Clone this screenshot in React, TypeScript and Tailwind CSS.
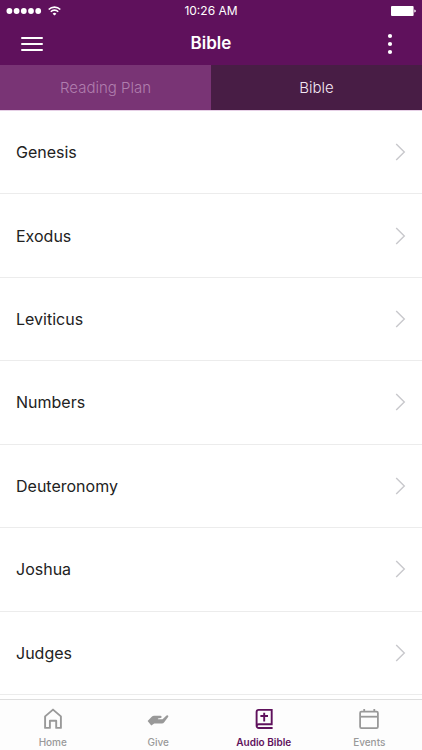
import type { ReactNode } from 'react'

const books = ['Genesis', 'Exodus', 'Leviticus', 'Numbers', 'Deuteronomy', 'Joshua', 'Judges']

const HomeIcon = () => (
  <svg className="h-6 w-6" viewBox="0 0 24 24" fill="none" stroke="currentColor" strokeWidth="1.9">
    <path d="M4.1 20.9V9.4L12 2.6l7.9 6.8v11.5h-4.7v-7.1H8.9v7.1z" strokeLinejoin="round" />
  </svg>
)

const GiveIcon = () => (
  <svg className="h-6 w-6" viewBox="0 0 24 24" fill="currentColor">
    <path d="M1.6 14 6 9.6q.8-.9 2-.9h6.4q1.2 0 1.2 1.2 0 1-1.1 1.2l-2.6.5v.6h4.6l4-3.6q.8-.7 1.5-.1.7.7.1 1.6l-3.9 5.2q-.9 1.2-2.3 1.2H8.2L5.3 18.4z" />
  </svg>
)

const BibleIcon = () => (
  <svg className="h-6 w-6" viewBox="0 0 24 24" fill="none" stroke="currentColor" strokeWidth="1.9">
    <path d="M20.6 21H6.8a2.2 2.2 0 0 1-2.2-2.2V5a2.1 2.1 0 0 1 2.1-2.1h13v14.3H6.8a2.1 2.1 0 0 0-2.1 2" />
    <path d="M12.2 5.8v8.8M8.4 9h7.6" />
  </svg>
)

const EventsIcon = () => (
  <svg className="h-6 w-6" viewBox="0 0 24 24" fill="none" stroke="currentColor" strokeWidth="1.8">
    <rect x="3.1" y="4.7" width="17.8" height="16.4" rx="1.3" />
    <path d="M3.1 9.7h17.8" />
    <path d="M7.2 2v2.7M17.3 2v2.7" />
  </svg>
)

const navItems: { label: string; icon: ReactNode; active?: boolean }[] = [
  { label: 'Home', icon: <HomeIcon /> },
  { label: 'Give', icon: <GiveIcon /> },
  { label: 'Audio Bible', icon: <BibleIcon />, active: true },
  { label: 'Events', icon: <EventsIcon /> },
]

function StatusBar() {
  return (
    <div className="grid h-[22px] grid-cols-3 items-center px-1.5">
      <div className="flex items-center gap-1.5">
        <svg className="h-1.5 w-9" viewBox="0 0 36 6" fill="currentColor">
          <circle cx="3.4" cy="3" r="2.9" />
          <circle cx="10.6" cy="3" r="2.9" />
          <circle cx="17.8" cy="3" r="2.9" />
          <circle cx="25" cy="3" r="2.9" />
          <circle cx="32.2" cy="3" r="2.9" />
        </svg>
        <svg className="h-[10px] w-[13px]" viewBox="0 0 13 10" fill="none" stroke="currentColor" strokeWidth="1.6">
          <path d="M.7 3.5a8.2 8.2 0 0 1 11.6 0" />
          <path d="M2.8 5.7a5.2 5.2 0 0 1 7.4 0" />
          <path d="M6.5 9.6 4.6 7.7a2.7 2.7 0 0 1 3.8 0z" fill="currentColor" stroke="none" />
        </svg>
      </div>
      <span className="text-center text-xs">10:26 AM</span>
      <svg className="h-[10px] w-[25px] justify-self-end" viewBox="0 0 25 10" fill="currentColor">
        <rect width="22.6" height="10" rx="1" />
        <path d="M23.3 3.4q1.5.2 1.5 1.6t-1.5 1.6z" />
      </svg>
    </div>
  )
}

export default function App() {
  return (
    <div className="flex min-h-screen flex-col bg-white font-['Inter','Liberation_Sans',sans-serif] text-[#222222]">
      {/* Header */}
      <header className="bg-[#5f115c] text-white">
        <StatusBar />
        <div className="flex h-[43px] items-center justify-between px-5">
          <button type="button" aria-label="Menu" className="w-6">
            <svg className="h-4 w-6" viewBox="0 0 24 16" stroke="currentColor" strokeWidth="2" strokeLinecap="round">
              <path d="M2 2h20M2 8h20M2 14h20" />
            </svg>
          </button>
          <h1 className="text-[17px] font-semibold">Bible</h1>
          <button type="button" aria-label="More options" className="w-6">
            <svg className="h-[22px] w-6" viewBox="0 0 24 22" fill="currentColor">
              <circle cx="12" cy="3" r="2.1" />
              <circle cx="12" cy="11" r="2.1" />
              <circle cx="12" cy="19" r="2.1" />
            </svg>
          </button>
        </div>
      </header>

      {/* Tabs */}
      <div role="tablist" className="grid h-[46px] grid-cols-2 border-b border-[#e6d0e6] text-[15px] font-light">
        <button type="button" role="tab" aria-selected="false" className="bg-[#793475] pt-0.5 text-[#b07eae]">
          Reading Plan
        </button>
        <button type="button" role="tab" aria-selected="true" className="bg-[#481d45] pt-0.5 text-[#f3e6f3]">
          Bible
        </button>
      </div>

      {/* Books */}
      <ul className="grid flex-1 auto-rows-fr pb-1">
        {books.map((book) => (
          <li key={book} className="border-b border-[#ececec]">
            <a href="#" className="flex h-full items-center justify-between px-4">
              <span className="text-base">{book}</span>
              <svg className="h-[18px] w-[11px]" viewBox="0 0 11 18" fill="none" stroke="#c8c8cc" strokeWidth="1.4">
                <path d="M1.2 1 9.3 9l-8.1 8" />
              </svg>
            </a>
          </li>
        ))}
      </ul>

      {/* Bottom navigation */}
      <nav className="grid grid-cols-4 border-t border-[#dedede] bg-[#fdfdfd] pt-[7px] pb-px">
        {navItems.map(({ label, icon, active }) => (
          <a
            key={label}
            href="#"
            aria-current={active ? 'page' : undefined}
            className={`flex flex-col items-center gap-1 ${
              active ? 'font-semibold text-[#5f115c]' : 'font-medium text-[#999999]'
            }`}
          >
            {icon}
            <span className="text-[10px] leading-[14px]">{label}</span>
          </a>
        ))}
      </nav>
    </div>
  )
}
